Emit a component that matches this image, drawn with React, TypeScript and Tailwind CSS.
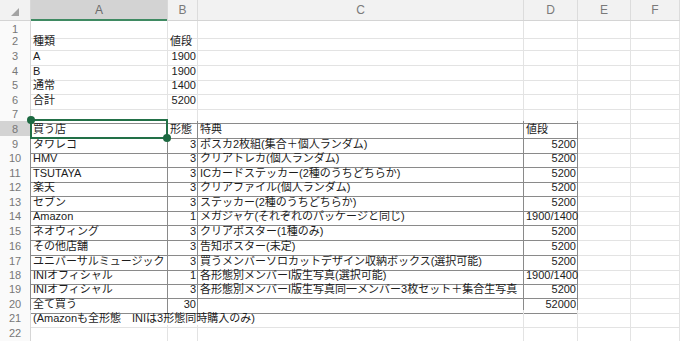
type Cell = string | number | null;

const COLS = "grid grid-cols-[31px_137px_30px_326px_54px_53px_1fr]";
const LETTERS = ["A", "B", "C", "D", "E", "F"];

// row heights in px, rows 1..23 (bottom border included)
const HEIGHTS = [12, 15, 15, 14, 15, 14, 15, 15, 14, 15, 14, 15, 14, 15, 15, 15, 14, 14, 15, 14, 15, 14, 15];
const H: Record<number, string> = {
  12: "h-[12px]",
  14: "h-[14px]",
  15: "h-[15px]",
};

const ROWS: Cell[][] = [
  [null, null, null, null],
  ["種類", "値段", null, null],
  ["A", 1900, null, null],
  ["B", 1900, null, null],
  ["通常", 1400, null, null],
  ["合計", 5200, null, null],
  [null, null, null, null],
  ["買う店", "形態", "特典", "値段"],
  ["タワレコ", 3, "ポスカ2枚組(集合＋個人ランダム)", 5200],
  ["HMV", 3, "クリアトレカ(個人ランダム)", 5200],
  ["TSUTAYA", 3, "ICカードステッカー(2種のうちどちらか)", 5200],
  ["楽天", 3, "クリアファイル(個人ランダム)", 5200],
  ["セブン", 3, "ステッカー(2種のうちどちらか)", 5200],
  ["Amazon", 1, "メガジャケ(それぞれのパッケージと同じ)", "1900/1400"],
  ["ネオウィング", 3, "クリアポスター(1種のみ)", 5200],
  ["その他店舗", 3, "告知ポスター(未定)", 5200],
  ["ユニバーサルミュージック", 3, "買うメンバーソロカットデザイン収納ボックス(選択可能)", 5200],
  ["INIオフィシャル", 1, "各形態別メンバーI版生写真(選択可能)", "1900/1400"],
  ["INIオフィシャル", 3, "各形態別メンバーI版生写真同一メンバー3枚セット＋集合生写真", 5200],
  ["全て買う", 30, null, 52000],
  ["(Amazonも全形態　INIは3形態同時購入のみ)", null, null, null],
  [null, null, null, null],
  [null, null, null, null],
];

const inTable = (r: number, c: number) => r >= 8 && r <= 20 && c <= 3;

function ColumnHeader() {
  return (
    <div className={`${COLS} h-[21px] bg-[#f2f2f2] border-b border-[#d4d4d4]`}>
      <div className="relative border-r border-[#d8d8d8]">
        {/* select-all corner */}
        <svg width="8" height="8" viewBox="0 0 8 8" className="absolute left-[11px] top-[8px]">
          <path d="M8 0 L8 8 L0 8 Z" fill="#a3a3a3" />
        </svg>
      </div>
      {LETTERS.map((l, i) => (
        <div
          key={l}
          className={
            i === 0
              ? "relative flex items-center justify-center bg-[#d3d3d3] border-r border-[#d8d8d8] text-[12px] text-[#6a6a6a]"
              : "flex items-center justify-center border-r border-[#dcdcdc] text-[12px] text-[#7a7a7a]"
          }
        >
          {l}
          {i === 0 && <div className="absolute left-0 right-0 -bottom-[1px] h-[2px] bg-[#3f8a62]" />}
        </div>
      ))}
    </div>
  );
}

function Row({ n, cells }: { n: number; cells: Cell[] }) {
  const selected = n === 8;
  const headCls = [
    "flex items-center justify-center border-b border-[#e3e3e3] text-[11px] text-[#777]",
    selected ? "bg-[#d3d3d3] text-[#555]" : "bg-[#fafafa]",
    inTable(n, 0) ? "border-r border-r-[#8a8a8a]" : "border-r border-r-[#d6d6d6]",
  ].join(" ");

  return (
    <div className={`${COLS} ${H[HEIGHTS[n - 1]]}`}>
      {/* last row is only a sliver at the window edge, its number stays below */}
      <div className={headCls}>{n <= 22 ? n : null}</div>
      {[0, 1, 2, 3, 4, 5].map((c) => {
        const v = c < 4 ? cells[c] : null;
        const isNum = typeof v === "number";
        const table = inTable(n, c);
        const topOfTable = n === 7 && c <= 3;
        // overflowing note in row 21 hides the gridlines it crosses
        const spill = n === 21 && (c === 0 || c === 1);
        const cls = [
          "relative flex items-center whitespace-nowrap text-[11px] leading-[13px] text-[#1c1c1c]",
          isNum ? "justify-end pr-[1px]" : "pl-[2px]",
          table ? "border-r border-b border-[#8a8a8a]" : "border-r border-b border-[#e3e3e3]",
          topOfTable ? "border-b-[#8a8a8a]" : "",
          spill ? "border-r-transparent" : "",
        ].join(" ");
        return (
          <div key={c} className={cls}>
            {v !== null && <span className="relative z-[1]">{v}</span>}
            {selected && c === 0 && (
              <div className="absolute -left-[1px] -top-[2px] -right-[1px] -bottom-[1px] z-10 border-2 border-[#227047]">
                <span className="absolute -left-[5px] -top-[5px] h-[8px] w-[8px] rounded-full bg-[#1d6a42]" />
                <span className="absolute -right-[5px] -bottom-[5px] h-[8px] w-[8px] rounded-full bg-[#1d6a42]" />
              </div>
            )}
          </div>
        );
      })}
    </div>
  );
}

export default function App() {
  return (
    <div className="w-[680px] h-[341px] overflow-hidden bg-white font-['Liberation_Sans','Noto_Sans_CJK_JP',sans-serif]">
      <ColumnHeader />
      {ROWS.map((cells, i) => (
        <Row key={i} n={i + 1} cells={cells} />
      ))}
    </div>
  );
}
